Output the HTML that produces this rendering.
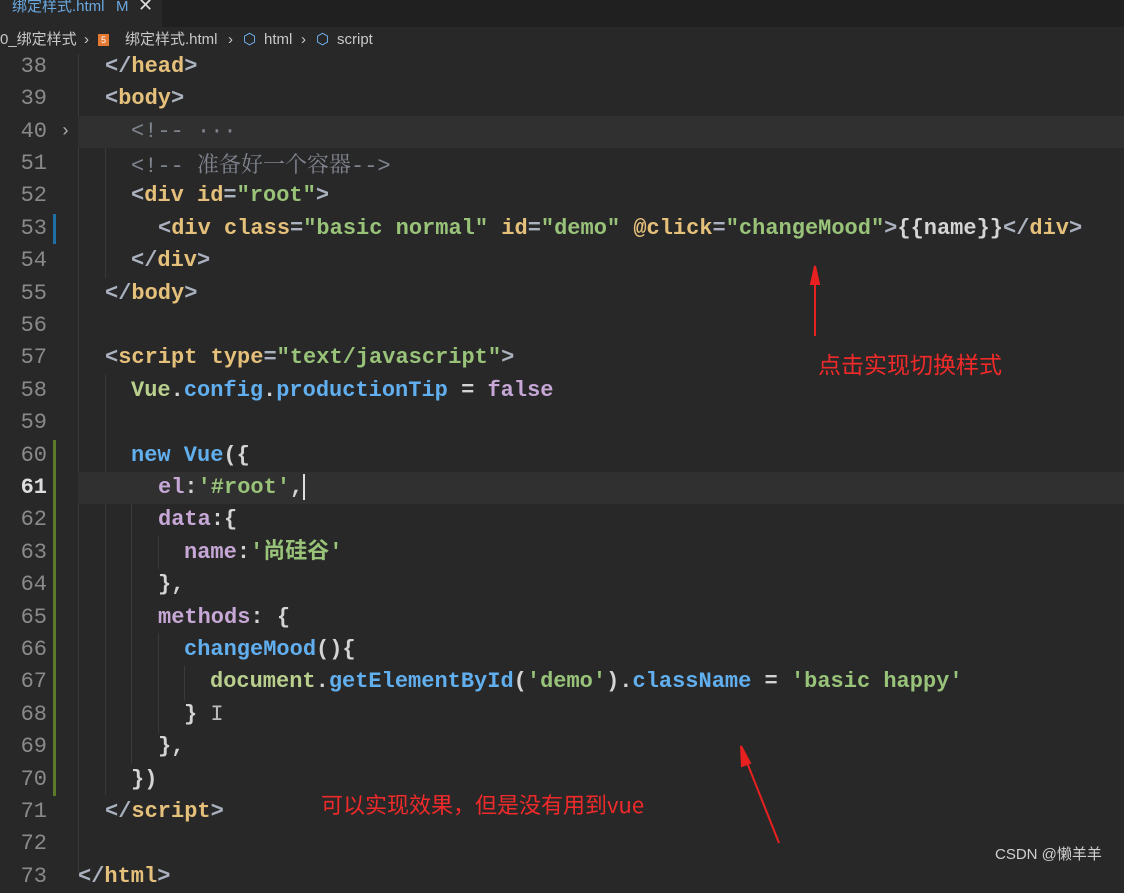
<!DOCTYPE html>
<html><head><meta charset="utf-8"><style>
body{margin:0;width:1124px;height:872px;background:#282828;overflow:hidden;position:relative;font-family:"Liberation Mono","Noto Sans CJK SC",monospace;}
.tabbar{position:absolute;left:0;top:0;width:1124px;height:27px;background:#202020;}
.tab{position:absolute;left:0;top:0;width:162px;height:27px;background:#282828;font:15px "Liberation Sans","Noto Sans CJK SC",sans-serif;color:#6aa8e0;line-height:17px;}
.crumb{position:absolute;left:0;top:27px;width:1124px;height:26px;background:#282828;font:15px "Liberation Sans","Noto Sans CJK SC",sans-serif;color:#c8c8c8;line-height:26px;white-space:nowrap;}
.row{position:absolute;left:0;height:32.4px;width:1124px;line-height:32.4px;font-size:22px;white-space:pre;}
.hl{background:#303030;}
.ln{position:absolute;left:0;width:47px;text-align:right;color:#8a8a8a;}
.code{position:absolute;left:78px;font-weight:bold;}
.p{color:#abb2bf}.t{color:#e5c07b}.s{color:#98c379}.c{color:#7f848e;font-weight:normal}.b{color:#61afef}.v{color:#c6a7d6}.g{color:#b9cf8e}.w{color:#d4d4d4}
.guide{position:absolute;width:1px;background:#3a3a3a;}
.red{position:absolute;color:#f02a2a;font:23px "Noto Sans CJK SC",sans-serif;white-space:nowrap;}
</style></head><body>
<div class="tabbar"><div class="tab"><span style="position:absolute;left:12px;top:-2px">绑定样式.html</span><span style="position:absolute;left:116px;top:-2px">M</span><span style="position:absolute;left:138px;top:-3px;color:#ddd;font-size:18px">✕</span></div></div>
<div class="crumb"><span style="position:absolute;left:0">0_绑定样式</span><span style="position:absolute;left:84px">›</span><span style="position:absolute;left:98px;top:7px;width:11px;height:12px;background:#e37933;color:#fff;font-size:9px;line-height:12px;text-align:center">5</span><span style="position:absolute;left:125px">绑定样式.html</span><span style="position:absolute;left:228px">›</span><span style="position:absolute;left:243px;color:#75beff">⬡</span><span style="position:absolute;left:264px">html</span><span style="position:absolute;left:301px">›</span><span style="position:absolute;left:316px;color:#75beff">⬡</span><span style="position:absolute;left:337px">script</span></div>

<div class="guide" style="left:78px;top:54px;height:818px"></div>
<div class="guide" style="left:105px;top:116px;height:162px"></div>
<div class="guide" style="left:105px;top:375px;height:420px"></div>
<div class="guide" style="left:131px;top:504px;height:260px"></div>
<div class="guide" style="left:158px;top:536px;height:33px"></div>
<div class="guide" style="left:158px;top:633px;height:100px"></div>
<div class="guide" style="left:184px;top:666px;height:35px"></div>
<div style="position:absolute;left:53px;top:214px;width:3px;height:30px;background:#1d6fa5"></div>
<div style="position:absolute;left:53px;top:440px;width:3px;height:356px;background:#5b7a2a"></div>

<div class="row" style="top:51px"><span class="ln">38</span><span class="code" style="left:105px"><span class="p">&lt;/</span><span class="t">head</span><span class="p">&gt;</span></span></div>
<div class="row" style="top:83px"><span class="ln">39</span><span class="code" style="left:105px"><span class="p">&lt;</span><span class="t">body</span><span class="p">&gt;</span></span></div>
<div class="row hl" style="top:116px;left:78px;width:1046px"></div>
<div class="row" style="top:116px"><span class="ln">40</span><span style="position:absolute;left:60px;color:#aaa;font-size:18px">›</span><span class="code c" style="left:131px">&lt;!-- ···</span></div>
<div class="row" style="top:148px"><span class="ln">51</span><span class="code c" style="left:131px">&lt;!-- <span style="font-family:'Noto Serif CJK SC',serif">准备好一个容器</span>--&gt;</span></div>
<div class="row" style="top:180px"><span class="ln">52</span><span class="code" style="left:131px"><span class="p">&lt;</span><span class="t">div id</span><span class="p">=</span><span class="s">"root"</span><span class="p">&gt;</span></span></div>
<div class="row" style="top:213px"><span class="ln">53</span><span class="code" style="left:158px"><span class="p">&lt;</span><span class="t">div class</span><span class="p">=</span><span class="s">"basic normal"</span> <span class="t">id</span><span class="p">=</span><span class="s">"demo"</span> <span class="t">@click</span><span class="p">=</span><span class="s">"changeMood"</span><span class="p">&gt;</span><span class="w">{{name}}</span><span class="p">&lt;/</span><span class="t">div</span><span class="p">&gt;</span></span></div>
<div class="row" style="top:245px"><span class="ln">54</span><span class="code" style="left:131px"><span class="p">&lt;/</span><span class="t">div</span><span class="p">&gt;</span></span></div>
<div class="row" style="top:278px"><span class="ln">55</span><span class="code" style="left:105px"><span class="p">&lt;/</span><span class="t">body</span><span class="p">&gt;</span></span></div>
<div class="row" style="top:310px"><span class="ln">56</span></div>
<div class="row" style="top:342px"><span class="ln">57</span><span class="code" style="left:105px"><span class="p">&lt;</span><span class="t">script type</span><span class="p">=</span><span class="s">"text/javascript"</span><span class="p">&gt;</span></span></div>
<div class="row" style="top:375px"><span class="ln">58</span><span class="code" style="left:131px"><span class="g">Vue</span><span class="w">.</span><span class="b">config</span><span class="w">.</span><span class="b">productionTip</span> <span class="w">=</span> <span class="v">false</span></span></div>
<div class="row" style="top:407px"><span class="ln">59</span></div>
<div class="row" style="top:440px"><span class="ln">60</span><span class="code" style="left:131px"><span class="b">new Vue</span><span class="w">({</span></span></div>
<div class="row hl" style="top:472px;left:78px;width:1046px"></div>
<div class="row" style="top:472px"><span class="ln" style="color:#ddd;font-weight:bold">61</span><span class="code" style="left:158px"><span class="v">el</span><span class="w">:</span><span class="s">'#root'</span><span class="w">,</span><span style="display:inline-block;width:2px;height:26px;background:#ddd;vertical-align:middle"></span></span></div>
<div class="row" style="top:504px"><span class="ln">62</span><span class="code" style="left:158px"><span class="v">data</span><span class="w">:{</span></span></div>
<div class="row" style="top:537px"><span class="ln">63</span><span class="code" style="left:184px"><span class="v">name</span><span class="w">:</span><span class="s">'尚硅谷'</span></span></div>
<div class="row" style="top:569px"><span class="ln">64</span><span class="code" style="left:158px"><span class="w">},</span></span></div>
<div class="row" style="top:602px"><span class="ln">65</span><span class="code" style="left:158px"><span class="v">methods</span><span class="w">: {</span></span></div>
<div class="row" style="top:634px"><span class="ln">66</span><span class="code" style="left:184px"><span class="b">changeMood</span><span class="w">(){</span></span></div>
<div class="row" style="top:666px"><span class="ln">67</span><span class="code" style="left:210px"><span class="g">document</span><span class="w">.</span><span class="b">getElementById</span><span class="w">(</span><span class="s">'demo'</span><span class="w">).</span><span class="b">className</span> <span class="w">=</span> <span class="s">'basic happy'</span></span></div>
<div class="row" style="top:699px"><span class="ln">68</span><span class="code" style="left:184px"><span class="w">}</span><span style="color:#bbb;font-weight:normal"> I</span></span></div>
<div class="row" style="top:731px"><span class="ln">69</span><span class="code" style="left:158px"><span class="w">},</span></span></div>
<div class="row" style="top:764px"><span class="ln">70</span><span class="code" style="left:131px"><span class="w">})</span></span></div>
<div class="row" style="top:796px"><span class="ln">71</span><span class="code" style="left:105px"><span class="p">&lt;/</span><span class="t">script</span><span class="p">&gt;</span></span></div>
<div class="row" style="top:828px"><span class="ln">72</span></div>
<div class="row" style="top:861px"><span class="ln">73</span><span class="code" style="left:78px"><span class="p">&lt;/</span><span class="t">html</span><span class="p">&gt;</span></span></div>

<div class="red" style="left:818px;top:346px">点击实现切换样式</div>
<div class="red" style="left:321px;top:788px;font-size:22px">可以实现效果，但是没有用到vue</div>
<svg style="position:absolute;left:0;top:0" width="1124" height="872"><g stroke="#e82020" stroke-width="2" fill="#e82020"><line x1="815" y1="336" x2="815" y2="280"/><polygon points="815,266 811,284 819,284"/><line x1="779" y1="843" x2="746" y2="760"/><polygon points="741,746 742,766 750,763"/></g></svg>
<div style="position:absolute;left:995px;top:843px;color:#d0d0d0;font:15px 'Liberation Sans','Noto Sans CJK SC',sans-serif">CSDN @懒羊羊</div>
</body></html>
